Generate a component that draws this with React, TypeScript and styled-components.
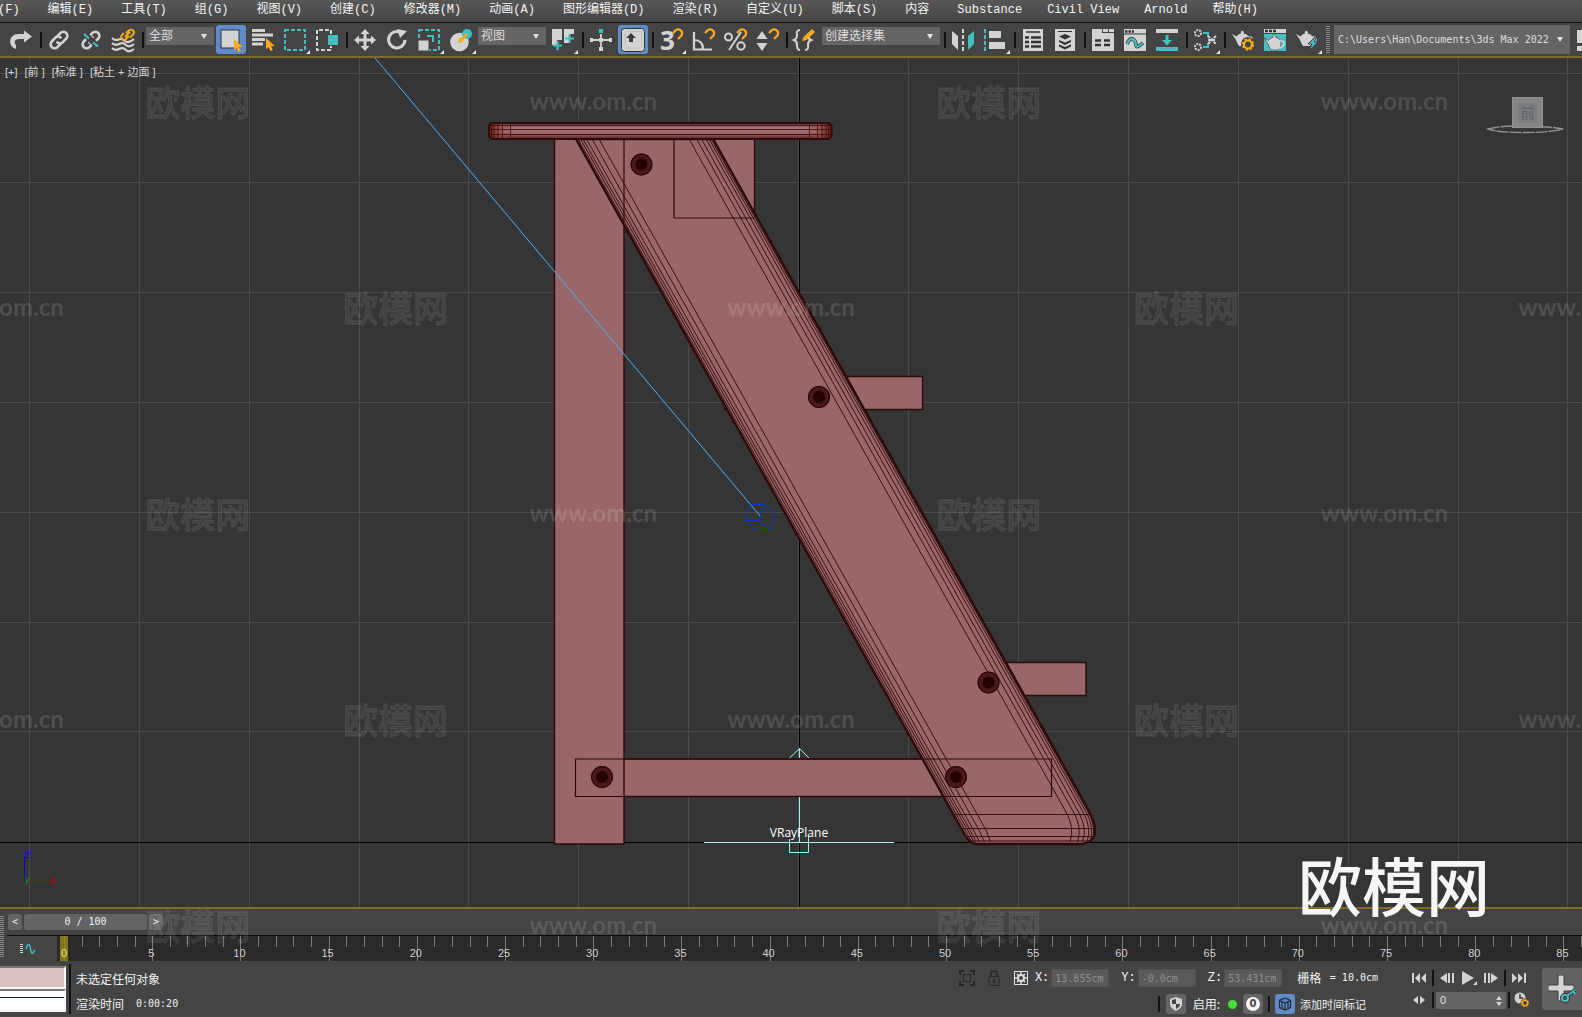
import React from "react";
import styled, { createGlobalStyle, css } from "styled-components";

const c = {
  panel: "#444444",
  dark: "#2a2a2a",
  view: "#353535",
  grid: "#4b4b4b",
  field: "#656565",
  icon: "#d3d3d3",
  teal: "#43bfc0",
  orange: "#f9ab1c",
  gold: "#806b26",
  blue: "#5f8cc8",
  clay: "#99676a",
  edge: "#2c0a09",
  cyan: "#a2efea",
};

const cjk = `"Noto Sans CJK SC", sans-serif`;

const GlobalStyle = createGlobalStyle`
  *, *::before, *::after { box-sizing: border-box; }
  body { margin: 0; background: ${c.panel}; overflow: hidden; }
  button, input, select { font: inherit; color: inherit; margin: 0; padding: 0; border: 0; background: none; border-radius: 0; outline: none; }
`;

const Shell = styled.div`
  position: relative;
  display: flex;
  flex-direction: column;
  height: 100vh;
  overflow: hidden;
  background: ${c.panel};
  color: #e6e6e6;
  font: 12px/16px "DejaVu Sans Mono", ${cjk};
`;

/* ---------- menu ---------- */

const MenuBar = styled.nav`
  display: flex;
  flex: none;
  gap: 25px;
  height: 23px;
  padding-top: 1px;
  background: linear-gradient(#575757, #464646);
  border-bottom: 1px solid #0c0c0c;
  overflow: hidden;
`;

const MenuItem = styled.button<{ $latin: boolean }>`
  flex: none;
  height: 18px;
  padding-right: ${(p) => (p.$latin ? 0 : 3)}px;
  font: 12px/18px "Liberation Mono", ${cjk};
  color: #f4f4f4;
  white-space: pre;
  &:first-child { margin-left: -26px; }
`;

/* ---------- toolbar ---------- */

const Toolbar = styled.div`
  display: flex;
  flex: none;
  align-items: center;
  height: 35px;
  padding-left: 5px;
  border-bottom: 2px solid ${c.gold};
  overflow: hidden;
  > svg { flex: none; }
`;

const ToolButton = styled.button<{ $active?: boolean; $flyout?: boolean }>`
  position: relative;
  display: flex;
  flex: none;
  align-items: center;
  justify-content: center;
  width: 30px;
  height: 29px;
  margin: 0 1px;
  border-radius: 3px;
  ${(p) => p.$active && css`background: ${c.blue};`}
  ${(p) =>
    p.$flyout &&
    css`
      &::after {
        content: "";
        position: absolute;
        right: 0;
        bottom: 0;
        border-left: 4px solid transparent;
        border-bottom: 4px solid #e8e8e8;
      }
    `}
  svg { display: block; overflow: visible; }
`;

const Divider = styled.span<{ $h?: number; $m?: string }>`
  flex: none;
  width: 2px;
  height: ${(p) => p.$h ?? 16}px;
  margin: ${(p) => p.$m ?? "0 1px 0 3px"};
  background: #121212;
`;

const ComboBox = styled.span<{ $tall?: boolean; $w: number }>`
  position: relative;
  display: block;
  flex: none;
  align-self: ${(p) => (p.$tall ? "center" : "flex-start")};
  width: ${(p) => p.$w}px;
  height: ${(p) => (p.$tall ? 29 : 18)}px;
  margin: ${(p) => (p.$tall ? "0 7px 0 0" : "4px 1px 0")};
  select {
    appearance: none;
    display: block;
    width: 100%;
    height: 100%;
    padding-left: ${(p) => (p.$tall ? 4 : 3)}px;
    background: ${c.field};
    font: ${(p) => (p.$tall ? "10px" : "12px")}/18px "DejaVu Sans Mono", ${cjk};
    color: #dedede;
  }
  &::after {
    content: "";
    position: absolute;
    right: 7px;
    top: ${(p) => (p.$tall ? 12 : 7)}px;
    border: 3px solid transparent;
    border-top: 5px solid #e4e4e4;
    border-bottom: 0;
    pointer-events: none;
  }
`;

const Grip = styled.span<{ $h: number }>`
  flex: none;
  width: 4px;
  height: ${(p) => p.$h}px;
  background: repeating-linear-gradient(#8a8a8a 0 1px, transparent 1px 2px);
`;

const ToolGrip = styled(Grip)`
  margin: 0 4px 0 3px;
`;

/* ---------- viewport ---------- */

const Viewport = styled.main`
  position: relative;
  flex: 1;
  min-height: 0;
  background: ${c.view};
  border-bottom: 2px solid ${c.gold};
  > svg { display: block; width: 100%; height: 100%; }
`;

const ViewLabels = styled.div`
  position: absolute;
  left: 5px;
  top: 6px;
  display: flex;
  gap: 7px;
  button { font: 11px/16px "Liberation Sans", ${cjk}; color: #d6d6d6; white-space: pre; }
`;

const Brand = styled.div`
  position: absolute;
  right: 92px;
  bottom: 96px;
  font: 500 64px/76px ${cjk};
  color: #f6f6f6;
  z-index: 2;
`;

const MarkLayer = styled.div`
  position: absolute;
  inset: -2px 0 0;
  display: flex;
  flex-direction: column;
  pointer-events: none;
  overflow: hidden;
`;

const MarkRow = styled.div<{ $shift?: boolean }>`
  display: flex;
  flex: none;
  width: ${(p) => (p.$shift ? "125%" : "100%")};
  margin-left: ${(p) => (p.$shift ? "-12.5%" : "0")};
  height: 206px;
  align-items: center;
`;

const Mark = styled.span<{ $logo?: boolean }>`
  flex: 1;
  text-align: center;
  color: ${(p) => (p.$logo ? "rgba(255,255,255,0.06)" : "rgba(255,255,255,0.14)")};
  font: ${(p) => (p.$logo ? `500 35px/40px ${cjk}` : `700 24px/40px Lato, sans-serif`)};
  ${(p) => p.$logo && css`-webkit-text-stroke: 1px rgba(255, 255, 255, 0.11);`}
`;

/* ---------- time controls ---------- */

const TimePanel = styled.section`
  display: flex;
  flex: none;
  gap: 3px;
`;

const TimeGrip = styled(Grip)`
  margin-top: 7px;
`;

const TimeBody = styled.div`
  flex: 1;
  min-width: 0;
`;

const SliderRow = styled.div`
  display: flex;
  gap: 2px;
  height: 27px;
  padding: 5px 0 0 1px;
  border-bottom: 1px solid #0b0b0b;
`;

const SliderButton = styled.button<{ $w: number }>`
  display: flex;
  align-items: center;
  justify-content: center;
  width: ${(p) => p.$w}px;
  height: 16px;
  border-radius: 3px;
  background: #646464;
  font: 10px/16px "DejaVu Sans Mono", monospace;
  color: #f0f0f0;
`;

const TrackRow = styled.div`
  display: flex;
  height: 25px;
`;

const CurveButton = styled.button`
  display: flex;
  align-items: center;
  width: 50px;
  padding-left: 13px;
`;

const Ruler = styled.div`
  display: flex;
  flex: 1;
  height: 25px;
  padding-left: 7px;
  background: ${c.dark};
  overflow: hidden;
`;

const Tick = styled.span<{ $major: boolean; $last: boolean }>`
  flex: ${(p) => (p.$last ? "0 0 1px" : "1 1 0")};
  min-width: 0;
  height: ${(p) => (p.$major ? 25 : 11)}px;
  border-left: 1px solid #7a7a7a;
`;

const TickLabel = styled.span<{ $current?: boolean }>`
  display: block;
  width: ${(p) => (p.$current ? 8 : 24)}px;
  height: 25px;
  margin-left: ${(p) => (p.$current ? -5 : -14)}px;
  padding-top: 9px;
  text-align: center;
  font: 11px/16px "Liberation Sans", sans-serif;
  color: ${(p) => (p.$current ? "#e9e37a" : "#cfcfcf")};
  background: ${(p) => (p.$current ? "rgba(150,140,20,0.8)" : "none")};
`;

/* ---------- status ---------- */

const StatusBar = styled.footer`
  display: flex;
  flex: none;
  height: 56px;
  align-items: flex-start;
  overflow: hidden;
`;

const Listener = styled.div`
  display: flex;
  flex-direction: column;
  width: 66px;
  margin: 5px 3px 0 0;
`;

const ListenerField = styled.input<{ $fill: string }>`
  width: 66px;
  height: 23px;
  background: ${(p) => p.$fill};
  border-top: 2px solid #777777;
  border-right: 2px solid #f4f4f4;
  border-bottom: 2px solid #f4f4f4;
`;

const StatusText = styled.div`
  display: flex;
  flex-direction: column;
  gap: 9px;
  margin: 10px auto 0 5px;
  font: 12px/16px ${cjk};
  color: #f2f2f2;
  div { display: flex; gap: 12px; white-space: nowrap; }
`;

const Digits = styled.span`
  font: 10px/16px "DejaVu Sans Mono", monospace;
`;

const Coordinates = styled.div`
  display: flex;
  flex-direction: column;
  flex: none;
  gap: 4px;
  margin: 6px 31px 0 0;
`;

const CoordRow = styled.div<{ $end?: boolean }>`
  display: flex;
  align-items: center;
  justify-content: ${(p) => (p.$end ? "flex-end" : "flex-start")};
  height: 22px;
  padding-right: ${(p) => (p.$end ? 12 : 0)}px;
`;

const IconButton = styled.button<{ $bg?: string; $w?: number; $ml?: number }>`
  display: flex;
  flex: none;
  align-items: center;
  justify-content: center;
  width: ${(p) => p.$w ?? 20}px;
  height: 20px;
  margin-left: ${(p) => p.$ml ?? 0}px;
  border-radius: 3px;
  background: ${(p) => p.$bg ?? "none"};
`;

const Axis = styled.label`
  display: flex;
  align-items: center;
  gap: 2px;
  margin-left: 12px;
  font: 12px/16px "Liberation Mono", monospace;
  color: #f4f4f4;
  &:first-of-type { margin-left: 6px; }
  input {
    width: 58px;
    height: 18px;
    padding-left: 3px;
    background: #5a5a5a;
    border: 1px solid #4f4f4f;
    color: #8f8f8f;
    font: 10px/16px "DejaVu Sans Mono", monospace;
  }
`;

const GridSize = styled.span`
  display: flex;
  align-items: center;
  gap: 6px;
  margin-left: 15px;
  white-space: pre;
  color: #f2f2f2;
  font: 12px/16px ${cjk};
`;

const Label = styled.span<{ $ml: number }>`
  margin-left: ${(p) => p.$ml}px;
  font: ${(p) => (p.$ml > 5 ? 12 : 11)}px/16px ${cjk};
  color: #f2f2f2;
`;

const Dot = styled.span`
  width: 9px;
  height: 9px;
  margin: 0 6px 0 8px;
  border-radius: 50%;
  background: #45dd3c;
`;

const Zero = styled.span`
  width: 14px;
  height: 14px;
  border-radius: 50%;
  background: #f4f4f4;
  color: #444444;
  font: 700 10px/14px "DejaVu Sans", sans-serif;
  text-align: center;
`;

const Transport = styled.div`
  display: flex;
  flex-direction: column;
  flex: none;
  gap: 2px;
  margin: 7px 8px 0 0;
`;

const TransportRow = styled.div`
  display: flex;
  align-items: center;
  height: 20px;
`;

const FrameBox = styled.label`
  position: relative;
  display: block;
  width: 70px;
  height: 17px;
  input {
    display: block;
    width: 100%;
    height: 100%;
    padding-left: 4px;
    background: ${c.field};
    color: #e0e0e0;
    font: 11px/16px "Liberation Sans", sans-serif;
  }
  svg { position: absolute; right: 4px; top: 4px; }
`;

const KeyButton = styled.button`
  display: flex;
  flex: none;
  align-items: center;
  justify-content: center;
  width: 40px;
  height: 42px;
  margin-top: 7px;
  border-radius: 3px 0 0 3px;
  background: #636363;
`;

/* ---------- icons ---------- */

const Svg = ({ w = 22, h = 22, children }: { w?: number; h?: number; children: React.ReactNode }) => (
  <svg width={w} height={h} viewBox={`0 0 ${w} ${h}`} fill="none" aria-hidden="true">
    {children}
  </svg>
);

const I = c.icon;
const Chain = () => (
  <g stroke={I} strokeWidth="2.6" strokeLinecap="round">
    <path d="M9 7.5l3.6-3.6a3.9 3.9 0 0 1 5.6 5.6l-3.6 3.8a3.8 3.8 0 0 1-5.2.2" />
    <path d="M13 14.5l-3.6 3.6a3.9 3.9 0 0 1-5.6-5.6l3.6-3.8a3.8 3.8 0 0 1 5.2-.2" />
  </g>
);
const Cursor = ({ x, y }: { x: number; y: number }) => (
  <path d={`M${x} ${y}v11.500l2.600-2.400 1.900 4 2.400-1.100-1.900-3.800 3.700-.300z`} fill={c.orange} />
);
const Magnet = () => (
  <path d="M12 5l3-3a4 4 0 0 1 5.5 5.5l-3.5 3.5" stroke={c.orange} strokeWidth="2.2" transform="translate(1 -1)" />
);
const Teapot = ({ y = 0 }: { y?: number }) => (
  <g transform={`translate(0 ${y})`}>
    <path d="M0 5l4.500 2.500Q6 5 9 4.400a1.600 1.600 0 1 1 2.600 0Q15 5 16.500 7.500C18 12 16 15.500 14 17H7Q5.500 15 4 11z" fill={I} />
    <path d="M16 8q5-.5 4 3t-5 4" stroke={I} strokeWidth="1.600" />
  </g>
);
const Gear = ({ x, y, r = 4 }: { x: number; y: number; r?: number }) => (
  <g stroke={c.orange}>
    <circle cx={x} cy={y} r={r} strokeWidth={r * 0.55} />
    <circle cx={x} cy={y} r={r * 1.35} strokeWidth={r * 0.4} strokeDasharray={`${r * 0.55} ${r * 0.51}`} />
  </g>
);

const icons: Record<string, React.ReactNode> = {
  redo: <path d="M6 20C-3 17-1 5 8 5h6V1.500l8 6-8 6V10H9c-5 0-5 4-3 6z" fill={I} />,
  link: <Chain />,
  unlink: <><Chain /><path d="M5 5l12 12" stroke={c.panel} strokeWidth="6" /><path d="M4 5l5 4.500M13 13.500l5 4" stroke={c.teal} strokeWidth="2.200" /></>,
  bind: <>
    <path d="M0 9q3 3 6.500 1.500T13 12t9-2M0 14q3 3 7 1t7 1 8-1M0 19q3 3 7 1t7 1 8-1" stroke={I} strokeWidth="2.200" />
    <g stroke={c.orange} strokeWidth="1.900"><path d="M14 4l3-2.500a2.800 2.800 0 0 1 4 4l-3 3M17 7l-3 3a2.600 2.600 0 0 1-4-4l2-2M13 8l5-5" /></g>
  </>,
  select: <><rect x="1" y="1" width="18" height="18" fill={I} stroke="#333" /><Cursor x={14} y={10} /></>,
  byName: <><path d="M0 1.500h13M0 6h21M0 10.500h13M0 15h11" stroke={I} strokeWidth="2.800" /><Cursor x={14} y={9} /></>,
  rect: <rect x="1" y="1" width="20" height="20" stroke={c.teal} strokeWidth="2" strokeDasharray="4 2" />,
  crossing: <><path d="M15 5V1H1v20h14v-4" stroke={I} strokeWidth="2" strokeDasharray="4 2" /><rect x="12" y="6" width="10" height="10" fill={c.teal} /></>,
  move: <path d="M11 0l4.500 5H12.500v4.500H17V6.500l5 4.500-5 4.500v-3h-4.500V17h3L11 22l-4.500-5h3v-4.500H5v3L0 11l5-4.500v3h4.500V5h-3z" fill={I} />,
  rotate: <><path d="M15.500 4A8.200 8.200 0 1 0 19 11" stroke={I} strokeWidth="3" /><path d="M11 0l10 2-7 7z" fill={I} /></>,
  scale: <><rect x="1" y="1" width="20" height="20" stroke={c.teal} strokeWidth="2" strokeDasharray="4 2" /><rect y="11" width="11" height="11" fill={I} stroke={c.panel} /><path d="M9 7h6v6" stroke={c.teal} strokeWidth="2" /></>,
  place: <><circle cx="9.500" cy="13" r="9.300" fill={I} /><circle cx="17" cy="5" r="5" fill={c.teal} /><path d="M17 5l-6 6" stroke={c.orange} strokeWidth="2.500" /><path d="M8 14l1.500-6 4.500 4.500z" fill={c.orange} /></>,
  pivot: <><path d="M0 0h10v11H5v5H0zM12 0h10v5h-5v9h-5z" fill={I} /><path d="M5.500 12v9M1 16.500h9M17.500 5v9M13 9.500h9" stroke={c.teal} strokeWidth="2.200" /></>,
  manipulate: <><path d="M11 5v17M0 11h22" stroke={I} strokeWidth="1.800" /><rect x="9" y="0" width="4" height="4" fill={c.teal} /><path d="M0 9h3v4H0zM19 9h3v4h-3zM9 18h4v4H9zM9 9h4v4H9z" fill={I} /></>,
  keyboard: <><rect x="-.5" y="-.5" width="23" height="23" rx="3" fill={I} stroke="#333" /><rect x="3" y="2.500" width="16.500" height="16.500" rx="1.500" stroke="#c0c0c0" /><path d="M9 4l5 5h-3v4H7V9H4z" fill="#3b3b3b" /></>,
  snap: <><text x="0" y="21" fill={I} fontFamily="Open Sans, sans-serif" fontWeight="700" fontSize="26">3</text><Magnet /></>,
  angle: <><path d="M2 3v17.500h18M2 11q9 0 9 9" stroke={I} strokeWidth="2.200" /><Magnet /></>,
  percent: <><g stroke={I} strokeWidth="2"><circle cx="4.500" cy="8" r="3.500" /><circle cx="17" cy="17" r="3.700" /><path d="M17 3L5 21" /></g><Magnet /></>,
  spinner: <><path d="M6 2l5.500 8H.5zM6 22l5.500-8H.5z" fill={I} /><Magnet /></>,
  sets: <><path d="M6 1Q2 1 3 6q0 4-3 5 3 1 3 5 0 5 3 5M11 21q4 0 3-5 0-4 3-5-3-1-2-4" stroke={I} strokeWidth="2" /><path d="M8 12l1.500-4L18 0l3 3-8.500 8z" fill={c.orange} /></>,
  mirror: <><path d="M0 2l6 5v14l-6-6z" fill={I} /><path d="M22 2l-6 5v14l6-6z" fill={c.teal} /><path d="M11 0v22" stroke={I} strokeWidth="2" strokeDasharray="4 2" /></>,
  align: <><path d="M1 0v22" stroke={c.teal} strokeWidth="2" strokeDasharray="4 2" /><path d="M5 2h12v7H5zM5 13h16v7H5z" fill={I} /></>,
  explorer: <><path d="M1 0h20v22H1z" fill={I} /><path d="M4 3h14" stroke="#333" strokeWidth="1.500" /><path d="M3 8.500h4m2 0h10M3 13h4m2 0h10M3 17.500h4m2 0h10" stroke="#333" strokeWidth="2.400" /></>,
  layers: <><path d="M1 0h20v22H1z" fill={I} /><path d="M4 2.500h14" stroke="#333" /><path d="M11 5l6 2.500-6 3-6-3zM5 11l6 2.500L17 11v2l-6 3-6-3zM5 15.500l6 2.500 6-2.500v2l-6 3-6-3z" fill="#333" /></>,
  ribbon: <><path d="M0 0h10v4h12v18H0zM11 0h5v3h-5zM17 0h5v3h-5z" fill={I} /><path d="M3 11.500h6m3 0h6M3 16h6m3 0h6" stroke="#333" strokeWidth="2.300" /></>,
  curve: <><path d="M0 0h22v22H0z" fill={I} /><path d="M0 5h22" stroke="#333" /><path d="M1 2.500h9" stroke="#333" strokeWidth="2.500" strokeDasharray="2.500 1" /><path d="M3 15q3-7 6-5t3 6 7-2" stroke="#333" strokeWidth="3.600" /><path d="M3 15q3-7 6-5t3 6 7-2" stroke={c.teal} strokeWidth="2.200" /></>,
  dope: <><path d="M0 0h22v4H0z" fill={I} /><path d="M0 18h22v4H0z" fill={c.teal} /><path d="M9.500 6h3v5h3.500l-5 5.500-5-5.500h3.500z" fill={c.teal} /></>,
  material: <><path d="M9 4h5v4M9 18h5v-4" stroke={c.teal} strokeWidth="2" /><g stroke={I} strokeWidth="2"><circle cx="4" cy="4" r="3" strokeDasharray="2 1" /><circle cx="4" cy="18" r="3" strokeDasharray="2 1" /><path d="M14 7l8 8M22 7l-8 8M14 11h8" strokeDasharray="3 1" /></g></>,
  setup: <><Teapot /><circle cx="16" cy="15" r="7" fill={c.panel} /><Gear x={16} y={15.5} r={4} /></>,
  frame: <><path d="M0 0h22v4H0z" fill={I} /><path d="M0 5h22v17H0z" fill={c.teal} /><path d="M1 2h12" stroke="#333" strokeWidth="2.500" strokeDasharray="3 1" /><g stroke="#333" strokeWidth=".6"><Teapot y={4} /></g></>,
  render: <><Teapot /><path d="M19 8l-7 7h4l-3 7 9-9h-4l3-5z" fill={c.teal} stroke={c.panel} /></>,
  more: <path d="M0 1h6v13H0zM0 17h6v5H0z" fill={I} />,
};

const Tool = ({ id, label, active, flyout }: { id: string; label: string; active?: boolean; flyout?: boolean }) => (
  <ToolButton $active={active} $flyout={flyout} aria-label={label} aria-pressed={active}>
    <Svg>{icons[id]}</Svg>
  </ToolButton>
);

const Combo = ({ label, value, w, tall }: { label: string; value: string; w: number; tall?: boolean }) => (
  <ComboBox $w={w} $tall={tall}>
    <select aria-label={label} defaultValue={value}>
      <option>{value}</option>
    </select>
  </ComboBox>
);

/* ---------- scene drawing ---------- */

const Bolt = ({ x, y }: { x: number; y: number }) => (
  <g fill="none">
    <circle cx={x} cy={y} r="11" fill="#421414" />
    <circle cx={x} cy={y} r="10.500" stroke="#250605" />
    <circle cx={x} cy={y} r="8.500" stroke="#733737" strokeDasharray="1 1" strokeWidth=".8" />
    <circle cx={x} cy={y} r="6.500" stroke="#5a2323" strokeDasharray="1 1" strokeWidth=".8" />
    <circle cx={x} cy={y} r="6" fill="#240403" />
  </g>
);

const slab = "M576 139H713L1089.500 812Q1100 833 1090.500 840.500Q1087 844 1078 844H977Q970 844 965 835Z";
const leftLoops = [2, 4.5, 7, 10.5, 16, 23];
const rightLoops = [2, 4, 7, 11.5, 16.5, 24];

const Scene = () => (
  <svg viewBox="0 58 1582 849" preserveAspectRatio="xMidYMid slice" role="img" aria-label="前视图">
    <defs>
      <linearGradient id="seat" x1="0" x2="0" y1="0" y2="1">
        <stop offset="0" stopColor="#5a2a2a" />
        <stop offset=".3" stopColor="#a57275" />
        <stop offset=".6" stopColor="#a06b6e" />
        <stop offset="1" stopColor="#5c2626" />
      </linearGradient>
      <linearGradient id="seatEnds">
        <stop offset="0" stopColor="#6b1a12" />
        <stop offset=".04" stopColor="#a04a3c" stopOpacity=".5" />
        <stop offset=".07" stopColor="#a04a3c" stopOpacity="0" />
        <stop offset=".93" stopColor="#a04a3c" stopOpacity="0" />
        <stop offset=".96" stopColor="#a04a3c" stopOpacity=".5" />
        <stop offset="1" stopColor="#6b1a12" />
      </linearGradient>
      <clipPath id="slabClip">
        <path d={slab} />
      </clipPath>
    </defs>
    <g stroke={c.grid}>
      {Array.from({ length: 15 }, (_, i) => <path key={i} d={`M${Math.floor(29.3 + i * 109.9)}.5 58V907`} />)}
      {Array.from({ length: 7 }, (_, i) => <path key={i} d={`M0 ${Math.floor(73 + i * 109.8)}.5H1582`} />)}
    </g>
    <path d="M799.500 58V907M0 842.500H1582" stroke="#000" />

    <g fill={c.clay} stroke={c.edge} strokeWidth="1.400">
      <path d="M674 139H754.500V218H674Z" />
      <path d="M725 376.500H922.500V409.500H725Z" />
      <path d="M900 662.500H1086V695.500H900Z" />
      <path d="M575.500 759H1051.500V796.500H575.500Z" />
      <path d="M554.500 139H624V844H554.500Z" />
      <path d={slab} strokeWidth="2.400" />
    </g>
    <g clipPath="url(#slabClip)" stroke="#3a1212" fill="none">
      {leftLoops.map((d) => <path key={d} d={`M${576 + d} 139L${963 + d} 830L${970 + d * 0.9} 842`} />)}
      {rightLoops.map((d) => <path key={d} d={`M${713 - d} 139L${1090 - d} 812Q${1099 - d} 828 ${1094 - d} 842`} />)}
      <path d="M950 814.500H1095M960 828.500H1098M964 836.500H1098M968 841H1094" />
    </g>
    <g fill="none" stroke={c.edge} strokeWidth="1.200">
      <path d="M674 139V218H754.500" />
      <path d="M624 139V222" />
      <path d="M575.500 759H1051.500V796.500H575.500Z" />
    </g>
    <rect x="489" y="123" width="342.500" height="16" rx="4" fill="url(#seat)" />
    <rect x="489" y="123" width="342.500" height="16" rx="4" fill="url(#seatEnds)" stroke={c.edge} strokeWidth="2" />
    <path d="M489 125.500H831M489 129.500H831M489 134.500H831M491.500 123V139M494 123V139M498 123V139M502.500 123V139M510.500 123V139M809.500 123V139M817.500 123V139M822 123V139M826 123V139M828.500 123V139" stroke="#3a1010" strokeOpacity=".85" />
    <Bolt x={641.5} y={164.5} />
    <Bolt x={819} y={397} />
    <Bolt x={988.5} y={682.5} />
    <Bolt x={956} y={777} />
    <Bolt x={602} y={777} />

    <path d="M375 58L760.500 516.500" stroke="#4db0fa" />
    <path d="M751 504.500H765L776 513.500L769.500 529.500H756L745 520.500ZM765 504.500L758.500 520.500H745M758.500 520.500L769.500 529.500" fill="none" stroke="#0a39c4" />

    <path d="M799.500 758V748.500L789.500 758M799.500 748.500L809 758M799.500 797V842M704 842.500H894M789.500 839V852.500H808.500V836" fill="none" stroke={c.cyan} />
    <text x="799" y="837" textAnchor="middle" fill="#fff" fontFamily="Open Sans, sans-serif" fontSize="12">VRayPlane</text>

    <path d="M24.500 857V881" stroke="#0808c8" />
    <path d="M30 881.500H51" stroke="#b00a0a" />
    <g fontFamily="DejaVu Sans, sans-serif" fontSize="10">
      <text x="24" y="858" fill="#0a0ad0">z</text>
      <text x="24" y="883" fill="#109010">y</text>
      <text x="50" y="884" fill="#b00a0a">x</text>
    </g>

    <path d="M1488 129Q1500 125.500 1525 126T1563 129Q1552 132.500 1525 132.500T1488 129Z" fill="none" stroke="#8f9296" strokeWidth="1.400" strokeDasharray="12 1" />
    <rect x="1512" y="97" width="31" height="31" fill="#868686" />
    <rect x="1512.500" y="97.500" width="30" height="30" fill="none" stroke="#929292" />
    <rect x="1518" y="103" width="19" height="19" fill="#7b7e81" />
    <text x="1527.500" y="118" textAnchor="middle" fill="#5d6267" fontFamily="Noto Sans CJK SC, sans-serif" fontSize="14">前</text>
  </svg>
);

/* ---------- page ---------- */

const menus = ["文件(F)", "编辑(E)", "工具(T)", "组(G)", "视图(V)", "创建(C)", "修改器(M)", "动画(A)", "图形编辑器(D)", "渲染(R)", "自定义(U)", "脚本(S)", "内容", "Substance", "Civil View", "Arnold", "帮助(H)"];
const latinMenus = ["Substance", "Civil View", "Arnold"];

const logoFirst = [true, false, true, false];
const urlFirst = [false, true, false, true, false];
const markRows = [logoFirst, urlFirst, logoFirst, urlFirst, logoFirst];

const coords = [["X", "13.855cm"], ["Y", "-0.0cm"], ["Z", "53.431cm"]];

export default function App() {
  return (
    <Shell>
      <GlobalStyle />
      <MenuBar>
        {menus.map((m) => <MenuItem key={m} $latin={latinMenus.includes(m)}>{m}</MenuItem>)}
      </MenuBar>

      <Toolbar>
        <Tool id="redo" label="重做" />
        <Divider />
        <Tool id="link" label="链接" />
        <Tool id="unlink" label="断开链接" />
        <Tool id="bind" label="绑定到空间扭曲" />
        <Divider />
        <Combo label="选择过滤器" value="全部" w={68} />
        <Tool id="select" label="选择对象" active />
        <Tool id="byName" label="按名称选择" />
        <Tool id="rect" label="矩形选择区域" flyout />
        <Tool id="crossing" label="窗口/交叉" />
        <Divider />
        <Tool id="move" label="移动" />
        <Tool id="rotate" label="旋转" />
        <Tool id="scale" label="缩放" flyout />
        <Tool id="place" label="放置" flyout />
        <Combo label="参考坐标系" value="视图" w={68} />
        <Tool id="pivot" label="使用轴点中心" flyout />
        <Divider />
        <Tool id="manipulate" label="选择并操纵" />
        <Tool id="keyboard" label="键盘快捷键覆盖" active />
        <Divider />
        <Tool id="snap" label="捕捉开关" flyout />
        <Tool id="angle" label="角度捕捉" />
        <Tool id="percent" label="百分比捕捉" />
        <Tool id="spinner" label="微调器捕捉" />
        <Divider />
        <Tool id="sets" label="编辑命名选择集" />
        <Combo label="命名选择集" value="创建选择集" w={118} />
        <Divider />
        <Tool id="mirror" label="镜像" />
        <Tool id="align" label="对齐" flyout />
        <Divider />
        <Tool id="explorer" label="场景资源管理器" />
        <Tool id="layers" label="层资源管理器" />
        <Divider />
        <Tool id="ribbon" label="功能区" />
        <Tool id="curve" label="曲线编辑器" />
        <Tool id="dope" label="图解视图" />
        <Divider />
        <Tool id="material" label="材质编辑器" flyout />
        <Divider />
        <Tool id="setup" label="渲染设置" />
        <Tool id="frame" label="渲染帧窗口" />
        <Tool id="render" label="渲染产品" flyout />
        <ToolGrip $h={27} />
        <Combo label="项目文件夹" value="C:\Users\Han\Documents\3ds Max 2022" w={236} tall />
        <Svg>{icons.more}</Svg>
      </Toolbar>

      <Viewport>
        <Scene />
        <ViewLabels>
          <button>[+]</button>
          <button>[前 ]</button>
          <button>[标准 ]</button>
          <button>[粘土 + 边面 ]</button>
        </ViewLabels>
      </Viewport>

      <TimePanel>
        <TimeGrip $h={42} />
        <TimeBody>
          <SliderRow>
            <SliderButton $w={14} aria-label="上一帧">&lt;</SliderButton>
            <SliderButton $w={123}>0 / 100</SliderButton>
            <SliderButton $w={14} aria-label="下一帧">&gt;</SliderButton>
          </SliderRow>
          <TrackRow>
            <CurveButton aria-label="打开迷你曲线编辑器">
              <Svg w={16} h={12}>
                <path d="M1.500 1v10" stroke={I} strokeWidth="3" strokeDasharray="1 1" />
                <path d="M6 6c2-7 4-5 4.500 0s2 6 4 1" stroke={c.teal} strokeWidth="1.500" />
              </Svg>
            </CurveButton>
            <Ruler>
              {Array.from({ length: 87 }, (_, i) => (
                <Tick key={i} $major={i % 5 === 0} $last={i === 86}>
                  {i % 5 === 0 && <TickLabel $current={i === 0}>{i}</TickLabel>}
                </Tick>
              ))}
            </Ruler>
          </TrackRow>
        </TimeBody>
      </TimePanel>

      <StatusBar>
        <Listener>
          <ListenerField $fill="#dcc3c3" aria-label="宏录制器" />
          <ListenerField $fill="linear-gradient(#fff 6px, #0000c8 6px 7px, #fff 7px)" aria-label="脚本侦听器" />
        </Listener>
        <Divider $h={50} $m="3px 0 0" />
        <StatusText>
          <div>未选定任何对象</div>
          <div>渲染时间 <Digits>0:00:20</Digits></div>
        </StatusText>

        <Coordinates>
          <CoordRow>
            <IconButton $w={16} aria-label="孤立当前选择">
              <Svg w={16} h={16}>
                <rect x="4.500" y="4.500" width="7" height="7" stroke="#262626" />
                <path d="M1 5V1h4M11 1h4v4M15 11v4h-4M5 15H1v-4" stroke="#262626" strokeWidth="2" />
              </Svg>
            </IconButton>
            <IconButton $w={16} $ml={11} aria-label="选择锁定">
              <Svg w={12} h={16}>
                <path d="M3 7V4a3 3 0 0 1 6 0v3" stroke="#262626" strokeWidth="1.500" />
                <rect x="1" y="6.500" width="10" height="9" rx="1" stroke="#262626" />
                <path d="M6 9v4M5 10h2" stroke="#262626" strokeWidth="2" />
              </Svg>
            </IconButton>
            <IconButton $w={16} $ml={11} aria-label="绝对模式变换输入">
              <Svg w={14} h={14}>
                <rect x=".5" y=".5" width="13" height="13" stroke="#e0e0e0" />
                <circle cx="7" cy="7" r="3" stroke="#e0e0e0" strokeWidth="2" />
                <path d="M7 1v2M7 11v2M1 7h2M11 7h2M3 3l1.500 1.500M11 3L9.500 4.500M3 11l1.500-1.500M11 11L9.500 9.500" stroke="#e0e0e0" strokeWidth="1.500" />
              </Svg>
            </IconButton>
            {coords.map(([axis, value]) => (
              <Axis key={axis}>
                {axis}:<input defaultValue={value} disabled />
              </Axis>
            ))}
            <GridSize>栅格 <Digits>= 10.0cm</Digits></GridSize>
          </CoordRow>
          <CoordRow $end>
            <Divider $m="0" />
            <IconButton $bg={c.field} $ml={6} aria-label="安全">
              <Svg w={12} h={14}>
                <path d="M6 0l6 2v5q0 4-6 7-6-3-6-7V2z" fill={I} />
                <path d="M6 2v5H2V3zM6 7h4q0 3-4 5z" fill="#444" />
              </Svg>
            </IconButton>
            <Label $ml={7}>启用:</Label>
            <Dot />
            <IconButton $bg={c.field} aria-label="通知"><Zero>0</Zero></IconButton>
            <Divider $m="0 5px" />
            <IconButton $bg={c.blue} aria-label="时间标记">
              <Svg w={14} h={14}>
                <path d="M7 1l5.500 2.500v7L7 13l-5.500-2.500v-7zM1.500 3.500L7 6l5.500-2.500M7 6v7M4 5v6.500M10 5v6.500" stroke="#202a38" strokeWidth="1.200" />
              </Svg>
            </IconButton>
            <Label $ml={5}>添加时间标记</Label>
          </CoordRow>
        </Coordinates>

        <Transport>
          <TransportRow>
            <IconButton aria-label="转至开头"><Svg w={16} h={12}><path d="M1 1h2v10H1zM9 1v10L4 6zM15 1v10l-5-5z" fill={I} /></Svg></IconButton>
            <Divider $m="0 3px" />
            <IconButton aria-label="上一帧"><Svg w={14} h={12}><path d="M7 1v10L0 6zM8 1h2v10H8zM12 1h2v10h-2z" fill={I} /></Svg></IconButton>
            <IconButton $w={24} aria-label="播放动画"><Svg w={16} h={14}><path d="M1 0l12 7-12 7z" fill={I} /><path d="M16 10v4h-4z" fill={I} /></Svg></IconButton>
            <IconButton aria-label="下一帧"><Svg w={14} h={12}><path d="M7 1v10l7-5zM0 1h2v10H0zM4 1h2v10H4z" fill={I} /></Svg></IconButton>
            <Divider $m="0 3px" />
            <IconButton aria-label="转至结尾"><Svg w={16} h={12}><path d="M13 1h2v10h-2zM7 1v10l5-5zM1 1v10l5-5z" fill={I} /></Svg></IconButton>
          </TransportRow>
          <TransportRow>
            <IconButton aria-label="关键点模式"><Svg w={12} h={10}><path d="M5 1v8L0 5zM7 1v8l5-4z" fill={I} /></Svg></IconButton>
            <Divider $m="0 2px 0 3px" />
            <FrameBox>
              <input defaultValue="0" aria-label="当前帧" />
              <Svg w={6} h={10}><path d="M3 0l3 4H0zM3 10l3-4H0z" fill={I} /></Svg>
            </FrameBox>
            <Divider $m="0 0 0 2px" />
            <IconButton $w={24} aria-label="时间配置">
              <Svg w={16} h={16}>
                <circle cx="6" cy="6" r="5.500" fill={I} />
                <path d="M6 2v4h3" stroke="#333" strokeWidth="1.400" />
                <circle cx="11" cy="11" r="4.500" fill={c.panel} />
                <Gear x={11} y={11} r={2.6} />
              </Svg>
            </IconButton>
          </TransportRow>
        </Transport>

        <KeyButton aria-label="设置关键点">
          <Svg w={28} h={28}>
            <path d="M10 0h6v10h10v6H16v10h-6V16H0v-6h10z" fill={I} stroke="#3c3c3c" />
            <g stroke="#333" strokeWidth="4"><circle cx="17" cy="23" r="3" /><path d="M19 21l8-6" /></g>
            <g stroke={c.teal} strokeWidth="2"><circle cx="17" cy="23" r="3" /><path d="M19 21l8-6M25 16l2 3" /></g>
          </Svg>
        </KeyButton>
      </StatusBar>

      <MarkLayer aria-hidden="true">
        {markRows.map((row, r) => (
          <MarkRow key={r} $shift={r % 2 === 1}>
            {row.map((logo, i) => <Mark key={i} $logo={logo}>{logo ? "欧模网" : "www.om.cn"}</Mark>)}
          </MarkRow>
        ))}
      </MarkLayer>
      <Brand>欧模网</Brand>
    </Shell>
  );
}
